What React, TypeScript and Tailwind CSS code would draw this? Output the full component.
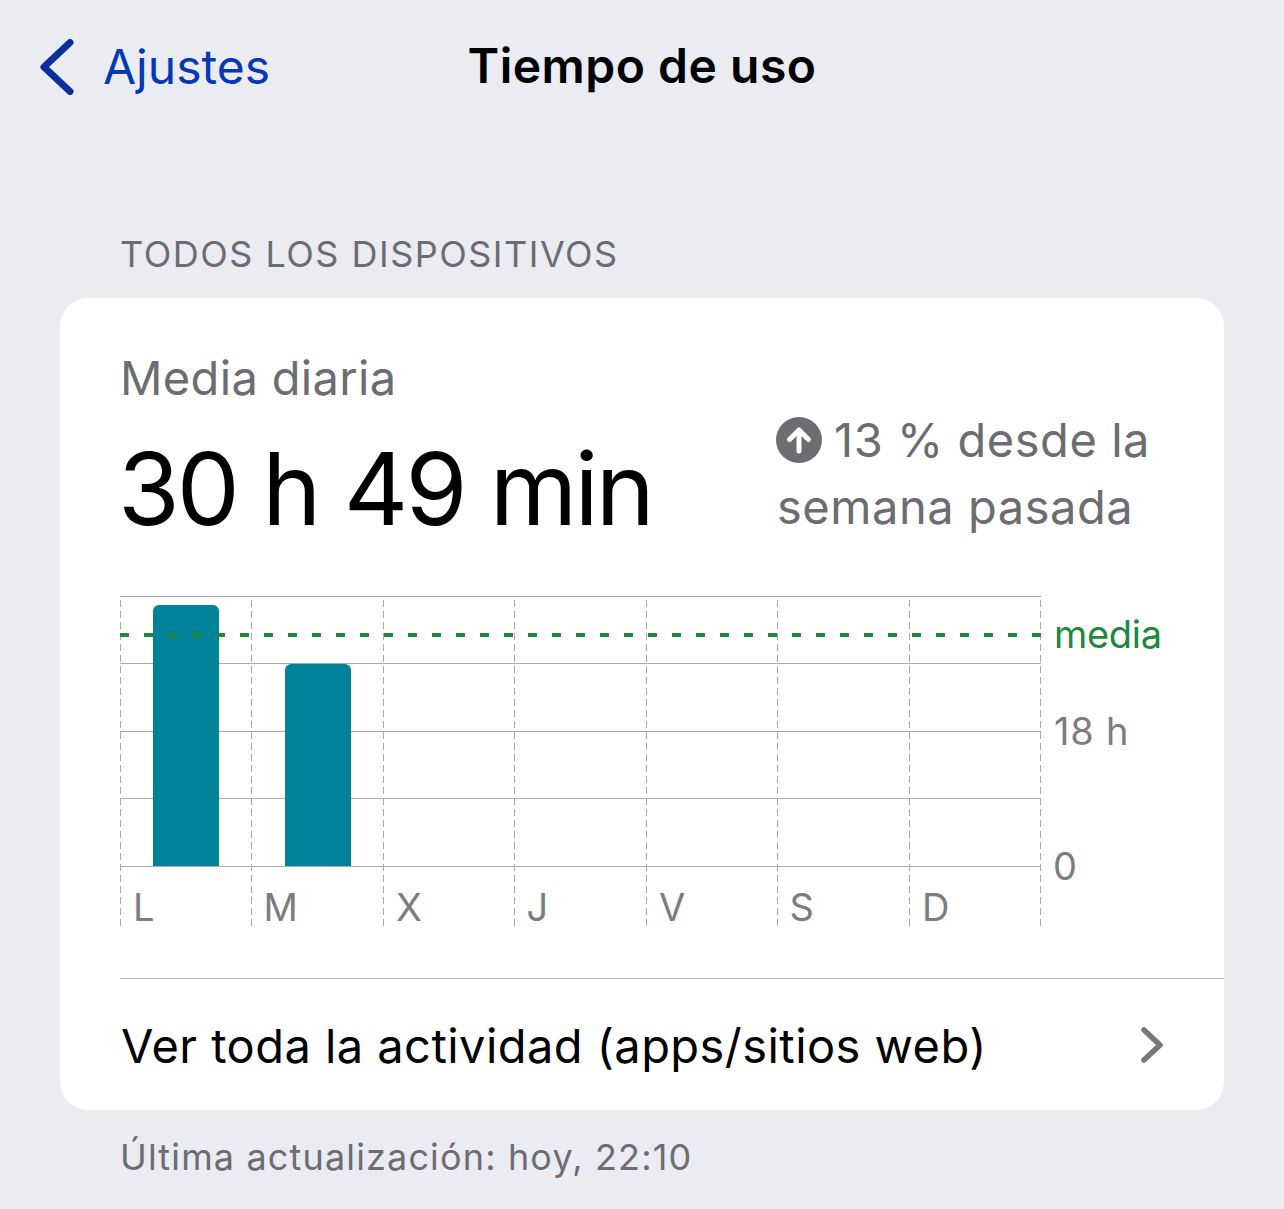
import React from 'react';

const days = ['L', 'M', 'X', 'J', 'V', 'S', 'D'];
const dayOffsets = ['pl-[13px]', 'pl-[12px]', 'pl-[13px]', 'pl-[12px]', 'pl-[13px]', 'pl-[12px]', 'pl-[13px]'];
const colX = [120.5, 251.5, 383.5, 514.5, 646.5, 777.5, 909.5, 1040.5];
const rowY = [596.5, 663.5, 731.5, 798.5, 866.5];

const Chart: React.FC = () => (
  <svg width="940" height="332" viewBox="120 595 940 332" className="block">
    {colX.map((x) => (
      <line key={x} x1={x} x2={x} y1={596} y2={926} stroke="#a9a9ad" strokeWidth="1" strokeDasharray="7 4" strokeDashoffset="7" />
    ))}
    {rowY.map((y) => (
      <line key={y} x1={120} x2={1041} y1={y} y2={y} stroke="#a9a9ad" strokeWidth="1.2" />
    ))}
    <path d="M153 866V611a6 6 0 0 1 6-6h54a6 6 0 0 1 6 6v255z" fill="#008299" />
    <path d="M285 866V670a6 6 0 0 1 6-6h54a6 6 0 0 1 6 6v196z" fill="#008299" />
    <line x1={120} x2={1041} y1={635} y2={635} stroke="#20883c" strokeWidth="4" strokeDasharray="9 15" />
  </svg>
);

const App: React.FC = () => {
  return (
    <div className="w-[1284px] h-[1209px] overflow-hidden bg-[#ebebf2] font-['Inter',sans-serif]">
      <header className="relative flex items-center h-[134px]">
        <svg width="34" height="56" viewBox="0 0 34 56" fill="none" className="ml-[40px]">
          <path d="M30 3.5 4 28l26 24.5" stroke="#0a2f9e" strokeWidth="7" strokeLinecap="round" strokeLinejoin="round" />
        </svg>
        <span className="ml-[29px] text-[48px] leading-none text-[#0438b6]">Ajustes</span>
        <h1 className="absolute inset-x-0 top-[40px] text-center text-[48px] leading-[52px] font-semibold tracking-[0.5px] text-black">
          Tiempo de uso
        </h1>
      </header>

      <div className="pl-[120px] h-[164px] pt-[100px] text-[36px] leading-[40px] text-[#6c6c72] tracking-[1.5px]">
        TODOS LOS DISPOSITIVOS
      </div>

      <section className="ml-[60px] w-[1164px] h-[812px] bg-white rounded-[28px] pl-[60px] pt-[50px] overflow-hidden">
        <div className="text-[47px] leading-[60px] tracking-[0.35px] text-[#6c6c72]">Media diaria</div>
        <div className="flex h-[187px]">
          <div className="w-[656px] -ml-[2px] mr-[2px] pt-[26px] text-[100px] leading-[110px] tracking-[-2.9px] text-black font-normal">
            30 h 49 min
          </div>
          <div className="-mt-[2px] text-[47px] leading-[67px] tracking-[0.55px] text-[#6c6c72]">
            <div className="flex items-center">
              <svg width="46" height="46" viewBox="0 0 46 46" className="mr-[12px]">
                <circle cx="23" cy="23" r="23" fill="#6c6c72" />
                <path d="M23 34V13M13.5 22.5 23 13l9.5 9.5" stroke="#fff" strokeWidth="5" strokeLinecap="round" strokeLinejoin="round" fill="none" />
              </svg>
              <span>13 % desde la</span>
            </div>
            <div className="pl-[1px]">semana pasada</div>
          </div>
        </div>

        <div className="relative h-[332px]">
          <Chart />
          <div className="absolute left-[934px] top-[15px] text-[38px] leading-[48px] tracking-[-0.3px] text-[#20883c]">media</div>
          <div className="absolute left-[934px] top-[112px] text-[38px] leading-[48px] tracking-[0.8px] text-[#7c7c82]">18 h</div>
          <div className="absolute left-[933px] top-[247px] text-[38px] leading-[48px] text-[#7c7c82]">0</div>
          <div className="absolute left-0 top-[288px] grid grid-cols-[repeat(7,131.5px)] text-[38px] leading-[48px] text-[#7c7c82]">
            {days.map((d, i) => (
              <span key={d + i} className={dayOffsets[i]}>{d}</span>
            ))}
          </div>
        </div>

        <div className="mt-[51px] border-t-[1.5px] border-[#b9b9bd] h-[133px] flex items-center justify-between pr-[61px] pt-[3px]">
          <span className="pl-[1px] text-[47px] tracking-[0.45px] text-black">Ver toda la actividad (apps/sitios web)</span>
          <svg width="22" height="36" viewBox="0 0 22 36" fill="none" className="-mt-[3px]">
            <path d="M3 3l16 15L3 33" stroke="#77777c" strokeWidth="5.5" strokeLinecap="round" strokeLinejoin="round" />
          </svg>
        </div>
      </section>

      <div className="pl-[120px] pt-[23px] text-[36px] leading-[48px] tracking-[1.15px] text-[#6c6c72]">
        Última actualización: hoy, 22:10
      </div>
    </div>
  );
};

export default App;
